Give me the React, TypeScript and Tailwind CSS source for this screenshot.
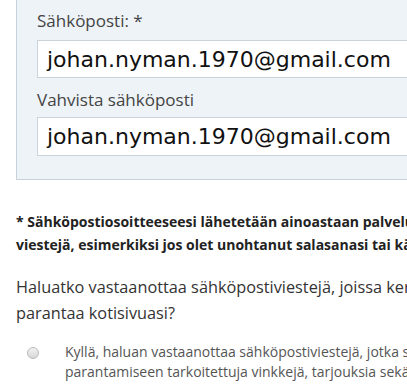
import React from 'react';

const open = { fontFamily: '"Open Sans", "Liberation Sans", sans-serif' };

const App = () => {
  return (
    <div className="w-[407px] h-[385px] overflow-hidden bg-white text-[#333]" style={open}>
      <div className="w-[700px]">
        {/* Email panel */}
        <div className="ml-4 -mt-px border border-[#c8d2dc] bg-[#eef3f8] pl-5 pr-5 pt-[6px] pb-[23px]">
          <label className="block text-[17px] leading-[30px] text-[#444]">Sähköposti: *</label>
          <div className="mt-[4px] h-[38px] border border-[#cbd4dd] bg-white pl-[9px] flex items-center">
            <span className="text-[22px] text-[#111]" style={{ fontFamily: '"DejaVu Sans", sans-serif' }}>
              johan.nyman.1970@gmail.com
            </span>
          </div>
          <label className="block mt-[7px] text-[17px] leading-[30px] text-[#444]">Vahvista sähköposti</label>
          <div className="mt-[2px] h-[39px] border border-[#cbd4dd] bg-white pl-[9px] flex items-center">
            <span className="text-[22px] text-[#111]" style={{ fontFamily: '"DejaVu Sans", sans-serif' }}>
              johan.nyman.1970@gmail.com
            </span>
          </div>
        </div>

        {/* Note */}
        <p className="ml-4 mt-[30px] text-[14px] leading-[23px] font-bold text-[#222] whitespace-nowrap">
          * Sähköpostiosoitteeseesi lähetetään ainoastaan palveluun liittyviä
          <br />
          viestejä, esimerkiksi jos olet unohtanut salasanasi tai käyttäjätunnuksesi.
        </p>

        {/* Question */}
        <p className="ml-4 mt-[18px] text-[16.3px] leading-[26px] text-[#333] whitespace-nowrap">
          Haluatko vastaanottaa sähköpostiviestejä, joissa kerrotaan, miten voit
          <br />
          parantaa kotisivuasi?
        </p>

        <div className="mt-[16px] flex items-start">
          <span className="ml-[27px] mt-[5px] w-[12px] h-[12px] rounded-full border border-[#bbb] bg-gradient-to-b from-[#f3f3f3] to-[#d6d6d6] shrink-0" />
          <p className="ml-[26px] text-[14px] leading-[20px] text-[#555] whitespace-nowrap">
            Kyllä, haluan vastaanottaa sähköpostiviestejä, jotka sisältävät kotisivujen
            <br />
            parantamiseen tarkoitettuja vinkkejä, tarjouksia sekä uutisia.
          </p>
        </div>
      </div>
    </div>
  );
};

export default App;
